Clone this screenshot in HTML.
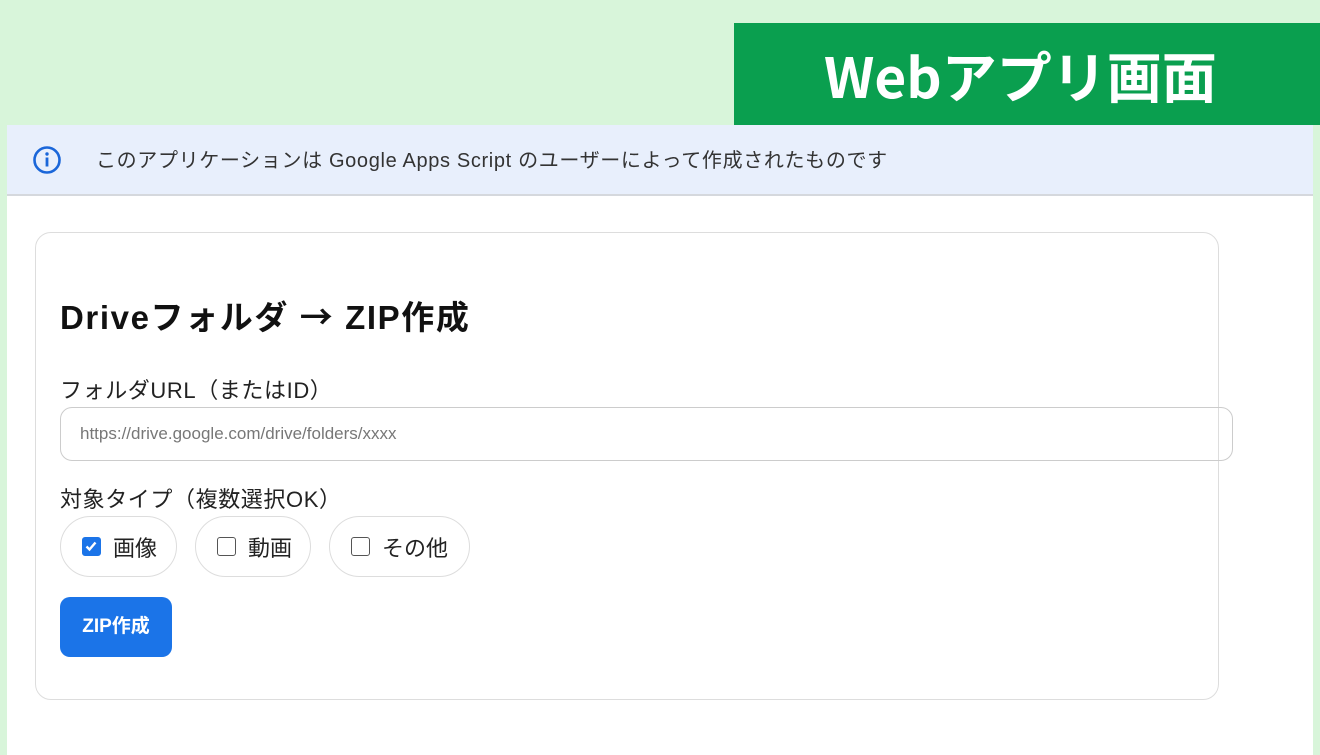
<!DOCTYPE html><html><head><meta charset="utf-8"><style>
body{margin:0;width:1320px;height:743px;background:#d8f5da;position:relative;overflow:hidden;font-family:"Liberation Sans","Noto Sans CJK JP",sans-serif;}
.ban{position:absolute;left:734px;top:23px;width:586px;height:102px;background:#0a9f4f;color:#fff;font:bold 55px "Noto Sans CJK JP",sans-serif;line-height:102px;text-indent:90px}
.frame{position:absolute;left:7px;top:125px;width:1306px;height:630px;background:#fff}
.info{position:absolute;left:0;top:0;width:1306px;height:69px;background:#e8effc;border-bottom:2px solid #d5d8dd}
.info span{position:absolute;left:89px;top:19px;font-size:20px;letter-spacing:0.65px;color:#333}
.card{position:absolute;left:28px;top:107px;width:1182px;height:466px;border:1.5px solid #ddd;border-radius:16px}
.t{position:absolute;left:53px;top:166px;font-size:33px;font-weight:bold;color:#111;letter-spacing:1.6px}
.t i{font-style:normal;font-family:"Noto Sans CJK JP",sans-serif}
.l{position:absolute;left:53px;font-size:22px;letter-spacing:0.6px;color:#222}
.in{position:absolute;left:53px;top:282px;width:1173px;height:54px;border:1.5px solid #ccc;border-radius:12px;box-sizing:border-box}
.in span{position:absolute;left:19px;top:16px;font-size:17px;color:#777}
.pill{position:absolute;top:391px;height:61px;border:1.5px solid #ddd;border-radius:31px;box-sizing:border-box;font-size:22px;color:#222}
.cb{position:absolute;left:21px;top:20px;width:19px;height:19px;border:1.5px solid #555;border-radius:3px;box-sizing:border-box}
.pill b{font-weight:normal;position:absolute;left:52px;top:14px}
.btn{position:absolute;left:53px;top:472px;width:112px;height:60px;background:#1b74e8;border-radius:10px;color:#fff;font-size:19px;font-weight:bold;text-align:center;line-height:60px}
</style></head><body>
<div class="ban">Webアプリ画面</div>
<div class="frame">
<div class="info"><svg style="position:absolute;left:25px;top:20px" width="30" height="30" viewBox="0 0 30 30"><circle cx="15" cy="15" r="12.5" fill="none" stroke="#1a66d9" stroke-width="2.6"/><rect x="13.6" y="12.5" width="2.8" height="9" fill="#1a66d9"/><circle cx="15" cy="9" r="1.7" fill="#1a66d9"/></svg><span>このアプリケーションは Google Apps Script のユーザーによって作成されたものです</span></div>
<div class="card"></div>
<div class="t">Driveフォルダ <i>→</i> ZIP作成</div>
<div class="l" style="top:248px">フォルダURL（またはID）</div>
<div class="in"><span>https://drive.google.com/drive/folders/xxxx</span></div>
<div class="l" style="top:357px">対象タイプ（複数選択OK）</div>
<div class="pill" style="left:53px;width:117px"><div class="cb" style="background:#1b74e8;border-color:#1b74e8"><svg width="16" height="16" viewBox="0 0 16 16" style="position:absolute;left:0;top:0"><path d="M3.5 8.5l3 3 6-7" stroke="#fff" stroke-width="2.4" fill="none"/></svg></div><b>画像</b></div>
<div class="pill" style="left:188px;width:116px"><div class="cb"></div><b>動画</b></div>
<div class="pill" style="left:322px;width:141px"><div class="cb"></div><b>その他</b></div>
<div class="btn">ZIP作成</div>
</div>
</body></html>
